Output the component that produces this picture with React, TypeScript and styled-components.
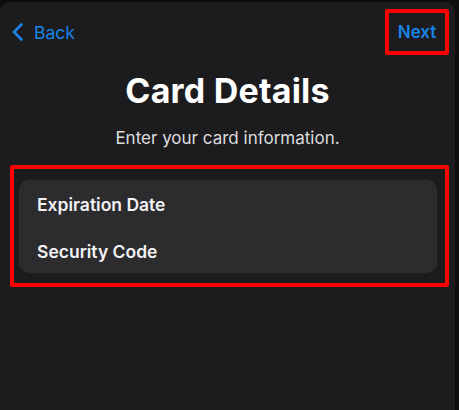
import React from 'react';
import styled, { createGlobalStyle } from 'styled-components';

const GlobalStyle = createGlobalStyle`
  html, body {
    margin: 0;
    padding: 0;
    background: #0e0e0f;
  }
  body {
    font-family: Inter, "Noto Sans", "Liberation Sans", sans-serif;
    -webkit-font-smoothing: antialiased;
  }
`

const Screen = styled.div`
  width: 455px;
  height: 408px;
  margin-top: 2px;
  background: #1c1c1e;
  border-radius: 10px 10px 0 0;
  display: flex;
  flex-direction: column;
  box-sizing: border-box;
`

const NavBar = styled.div`
  display: flex;
  align-items: center;
  justify-content: space-between;
  height: 46px;
  margin-top: 7px;
  padding: 0 6px 0 12px;
`

const BackButton = styled.button`
  display: flex;
  align-items: center;
  gap: 11px;
  background: none;
  border: none;
  padding: 0;
  color: #1a84e6;
  font-family: inherit;
  font-size: 17.5px;
  cursor: pointer;
`

const Highlight = styled.div<{ $radius?: number }>`
  border: 4px solid #ff0000;
  border-radius: ${p => p.$radius ?? 2}px;
  box-sizing: border-box;
`

const NextBox = styled(Highlight)`
  width: 64px;
  height: 46px;
  display: flex;
  align-items: center;
  justify-content: center;
`

const NextButton = styled.button`
  background: none;
  border: none;
  padding: 0;
  color: #1a84e6;
  font-family: inherit;
  font-size: 17px;
  font-weight: 600;
  cursor: pointer;
`

const Title = styled.h1`
  margin: 16px 0 0;
  text-align: center;
  color: #ffffff;
  font-size: 34px;
  font-weight: 700;
  line-height: 40px;
  letter-spacing: 0.2px;
`

const Subtitle = styled.p`
  margin: 17px 0 0;
  text-align: center;
  color: #dcdcdf;
  font-size: 17px;
  line-height: 20px;
`

const GroupFrame = styled(Highlight)`
  margin: 17px 6px 0 10px;
  padding: 11px 8px 10px 5px;
`

const Card = styled.div`
  background: #2c2c2e;
  border-radius: 10px;
  display: flex;
  flex-direction: column;
`

const Row = styled.div<{ $divider?: boolean; $height: number }>`
  height: ${p => p.$height}px;
  display: flex;
  align-items: center;
  margin-left: 18px;
  padding-top: 3px;
  box-sizing: border-box;
  color: #f2f2f4;
  font-size: 17.5px;
  font-weight: 600;
  border-bottom: ${p => (p.$divider ? '1px solid #303032' : 'none')};
`

export default function App() {
    return (
        <>
            <GlobalStyle />
            <Screen>
                <NavBar>
                    <BackButton>
                        <svg width="11" height="18" viewBox="0 0 11 18" fill="none">
                            <path d="M9.5 1.5 2 9l7.5 7.5" stroke="#1a84e6" strokeWidth="2.6" strokeLinecap="round" strokeLinejoin="round" />
                        </svg>
                        Back
                    </BackButton>
                    <NextBox>
                        <NextButton>Next</NextButton>
                    </NextBox>
                </NavBar>
                <Title>Card Details</Title>
                <Subtitle>Enter your card information.</Subtitle>
                <GroupFrame>
                    <Card>
                        <Row $divider $height={47}>Expiration Date</Row>
                        <Row $height={46}>Security Code</Row>
                    </Card>
                </GroupFrame>
            </Screen>
        </>
    )
}
